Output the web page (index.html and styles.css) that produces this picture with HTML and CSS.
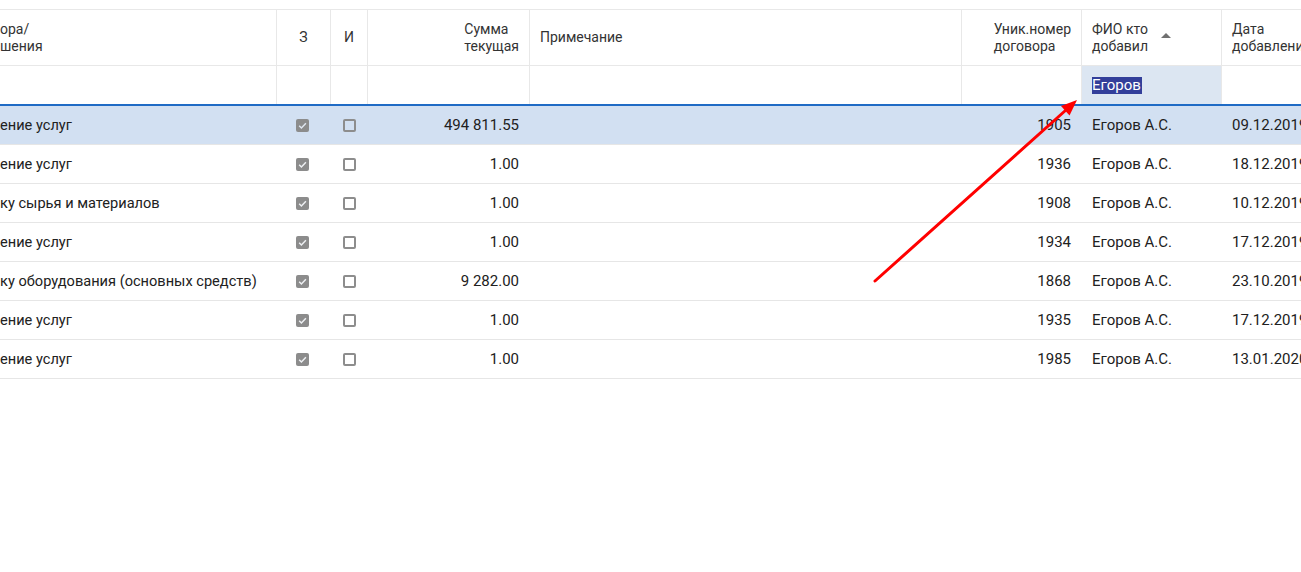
FILE: index.html
```html
<!DOCTYPE html>
<html lang="ru">
<head>
<meta charset="utf-8">
<title>Договоры</title>
<link rel="stylesheet" href="styles.css">
</head>
<body>
<div class="grid">
  <div class="row head">
    <div class="c c1"><div class="ttl">ора/<br>шения</div></div>
    <div class="c c2 center"><div class="ttl">З</div></div>
    <div class="c c3 center"><div class="ttl">И</div></div>
    <div class="c c4 right"><div class="ttl">Сумма<br>текущая</div></div>
    <div class="c c5"><div class="ttl">Примечание</div></div>
    <div class="c c6 right"><div class="ttl">Уник.номер<br>договора</div></div>
    <div class="c c7"><div class="ttl">ФИО кто<br>добавил</div><span class="sort"></span></div>
    <div class="c c8"><div class="ttl">Дата<br>добавления</div></div>
  </div>
  <div class="row filter">
    <div class="c c1"></div>
    <div class="c c2"></div>
    <div class="c c3"></div>
    <div class="c c4"></div>
    <div class="c c5"></div>
    <div class="c c6"></div>
    <div class="c c7 active"><span class="sel">Егоров</span></div>
    <div class="c c8"></div>
  </div>

  <div class="row data selected">
    <div class="c c1">ение услуг</div>
    <div class="c c2 center"><span class="cb on"><svg viewBox="0 0 13 13" width="13" height="13"><path d="M3.2 6.8 L5.4 9 L9.9 4.3" fill="none" stroke="#dfe6f0" stroke-width="1.5"/></svg></span></div>
    <div class="c c3 center"><span class="cb"></span></div>
    <div class="c c4 right">494 811.55</div>
    <div class="c c5"></div>
    <div class="c c6 right">1905</div>
    <div class="c c7">Егоров А.С.</div>
    <div class="c c8">09.12.2019</div>
  </div>
  <div class="row data">
    <div class="c c1">ение услуг</div>
    <div class="c c2 center"><span class="cb on"><svg viewBox="0 0 13 13" width="13" height="13"><path d="M3.2 6.8 L5.4 9 L9.9 4.3" fill="none" stroke="#eef0f3" stroke-width="1.5"/></svg></span></div>
    <div class="c c3 center"><span class="cb"></span></div>
    <div class="c c4 right">1.00</div>
    <div class="c c5"></div>
    <div class="c c6 right">1936</div>
    <div class="c c7">Егоров А.С.</div>
    <div class="c c8">18.12.2019</div>
  </div>
  <div class="row data">
    <div class="c c1">ку сырья и материалов</div>
    <div class="c c2 center"><span class="cb on"><svg viewBox="0 0 13 13" width="13" height="13"><path d="M3.2 6.8 L5.4 9 L9.9 4.3" fill="none" stroke="#eef0f3" stroke-width="1.5"/></svg></span></div>
    <div class="c c3 center"><span class="cb"></span></div>
    <div class="c c4 right">1.00</div>
    <div class="c c5"></div>
    <div class="c c6 right">1908</div>
    <div class="c c7">Егоров А.С.</div>
    <div class="c c8">10.12.2019</div>
  </div>
  <div class="row data">
    <div class="c c1">ение услуг</div>
    <div class="c c2 center"><span class="cb on"><svg viewBox="0 0 13 13" width="13" height="13"><path d="M3.2 6.8 L5.4 9 L9.9 4.3" fill="none" stroke="#eef0f3" stroke-width="1.5"/></svg></span></div>
    <div class="c c3 center"><span class="cb"></span></div>
    <div class="c c4 right">1.00</div>
    <div class="c c5"></div>
    <div class="c c6 right">1934</div>
    <div class="c c7">Егоров А.С.</div>
    <div class="c c8">17.12.2019</div>
  </div>
  <div class="row data">
    <div class="c c1">ку оборудования (основных средств)</div>
    <div class="c c2 center"><span class="cb on"><svg viewBox="0 0 13 13" width="13" height="13"><path d="M3.2 6.8 L5.4 9 L9.9 4.3" fill="none" stroke="#eef0f3" stroke-width="1.5"/></svg></span></div>
    <div class="c c3 center"><span class="cb"></span></div>
    <div class="c c4 right">9 282.00</div>
    <div class="c c5"></div>
    <div class="c c6 right">1868</div>
    <div class="c c7">Егоров А.С.</div>
    <div class="c c8">23.10.2019</div>
  </div>
  <div class="row data">
    <div class="c c1">ение услуг</div>
    <div class="c c2 center"><span class="cb on"><svg viewBox="0 0 13 13" width="13" height="13"><path d="M3.2 6.8 L5.4 9 L9.9 4.3" fill="none" stroke="#eef0f3" stroke-width="1.5"/></svg></span></div>
    <div class="c c3 center"><span class="cb"></span></div>
    <div class="c c4 right">1.00</div>
    <div class="c c5"></div>
    <div class="c c6 right">1935</div>
    <div class="c c7">Егоров А.С.</div>
    <div class="c c8">17.12.2019</div>
  </div>
  <div class="row data">
    <div class="c c1">ение услуг</div>
    <div class="c c2 center"><span class="cb on"><svg viewBox="0 0 13 13" width="13" height="13"><path d="M3.2 6.8 L5.4 9 L9.9 4.3" fill="none" stroke="#eef0f3" stroke-width="1.5"/></svg></span></div>
    <div class="c c3 center"><span class="cb"></span></div>
    <div class="c c4 right">1.00</div>
    <div class="c c5"></div>
    <div class="c c6 right">1985</div>
    <div class="c c7">Егоров А.С.</div>
    <div class="c c8">13.01.2020</div>
  </div>
</div>

<svg class="arrow" width="1301" height="572" viewBox="0 0 1301 572">
  <line x1="875" y1="281" x2="1066" y2="110" stroke="#ff0000" stroke-width="3" stroke-linecap="round"/>
  <polygon points="1077,100 1069.5,115.5 1061,106" fill="#ff0000"/>
</svg>
</body>
</html>
```

FILE: styles.css
```css
html, body {
  margin: 0;
  padding: 0;
  background: #ffffff;
  overflow: hidden;
}
body {
  width: 1301px;
  height: 572px;
  position: relative;
  font-family: Roboto, "Liberation Sans", Arial, sans-serif;
  font-size: 15px;
  color: #212121;
}
.grid {
  margin-top: 9px;
  width: 1500px;
}
.row {
  display: flex;
  box-sizing: border-box;
}
.c {
  box-sizing: border-box;
  flex: none;
  display: flex;
  align-items: center;
  padding: 0 10px;
  white-space: nowrap;
  overflow: hidden;
}
.c1 { width: 277px; padding-left: 0; }
.c2 { width: 54px; }
.c3 { width: 37px; }
.c4 { width: 162px; }
.c5 { width: 432px; }
.c6 { width: 120px; }
.c7 { width: 140px; }
.c8 { width: 300px; }
.center { justify-content: center; padding: 0; }
.right { justify-content: flex-end; }
.data .right { padding-right: 11px; }
.data .c1 { font-size: 14.6px; }

.head {
  height: 57px;
  border-top: 1px solid #e8e8e8;
  border-bottom: 1px solid #e8e8e8;
  color: #333333;
  font-size: 14px;
}
.head .c, .filter .c {
  border-right: 1px solid #e8e8e8;
}
.ttl {
  line-height: 17px;
  text-align: left;
}
.sort {
  display: inline-block;
  width: 0;
  height: 0;
  border-left: 5px solid transparent;
  border-right: 5px solid transparent;
  border-bottom: 5px solid #707070;
  margin-left: 13px;
  margin-top: -4px;
}
.filter {
  height: 40px;
  border-bottom: 2px solid #1f6bc5;
}
.filter .active {
  background: #dce6f2;
}
.sel {
  background: #333f9a;
  color: #ffffff;
  line-height: 17px;
  padding: 0 1px 0 0;
}
.data {
  height: 39px;
  border-bottom: 1px solid #e6e6e6;
}
.selected {
  background: #d2e0f2;
}
.cb {
  display: inline-block;
  box-sizing: border-box;
  width: 13px;
  height: 13px;
  border: 2px solid #8d8d8d;
  border-radius: 2px;
  margin-right: 1px;
}
.cb.on {
  border: none;
  background: #8c8c8c;
  margin-right: 3px;
}
.cb svg {
  display: block;
}
.arrow {
  position: absolute;
  left: 0;
  top: 0;
  pointer-events: none;
}
```
